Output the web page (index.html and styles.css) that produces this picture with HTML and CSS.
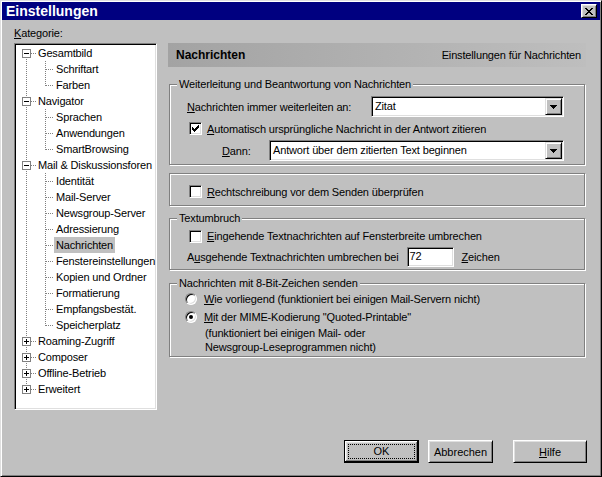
FILE: index.html
```html
<!DOCTYPE html>
<html>
<head>
  <meta charset="utf-8">
  <link rel="stylesheet" href="styles.css">
</head>
<body>
  <div class="window">
    <div class="titlebar">
      <span class="title">Einstellungen</span>
      <span class="close-btn">
        <svg width="8" height="7" viewBox="0 0 8 7" shape-rendering="crispEdges">
          <rect x="0" y="0" width="2" height="1"/><rect x="6" y="0" width="2" height="1"/>
          <rect x="1" y="1" width="2" height="1"/><rect x="5" y="1" width="2" height="1"/>
          <rect x="2" y="2" width="4" height="1"/>
          <rect x="3" y="3" width="2" height="1"/>
          <rect x="2" y="4" width="4" height="1"/>
          <rect x="1" y="5" width="2" height="1"/><rect x="5" y="5" width="2" height="1"/>
          <rect x="0" y="6" width="2" height="1"/><rect x="6" y="6" width="2" height="1"/>
        </svg>
      </span>
    </div>

    <div class="main">
      <div class="sidebar">
        <div class="sidebar-label"><u>K</u>ategorie:</div>
        <ul class="tree">
          <li>
            <div class="row"><span class="toggle"></span><span class="label">Gesamtbild</span></div>
            <ul>
              <li><div class="row"><span class="label">Schriftart</span></div></li>
              <li><div class="row"><span class="label">Farben</span></div></li>
            </ul>
          </li>
          <li>
            <div class="row"><span class="toggle"></span><span class="label">Navigator</span></div>
            <ul>
              <li><div class="row"><span class="label">Sprachen</span></div></li>
              <li><div class="row"><span class="label">Anwendungen</span></div></li>
              <li><div class="row"><span class="label">SmartBrowsing</span></div></li>
            </ul>
          </li>
          <li>
            <div class="row"><span class="toggle"></span><span class="label">Mail &amp; Diskussionsforen</span></div>
            <ul>
              <li><div class="row"><span class="label">Identität</span></div></li>
              <li><div class="row"><span class="label">Mail-Server</span></div></li>
              <li><div class="row"><span class="label">Newsgroup-Server</span></div></li>
              <li><div class="row"><span class="label">Adressierung</span></div></li>
              <li><div class="row"><span class="label selected">Nachrichten</span></div></li>
              <li><div class="row"><span class="label">Fenstereinstellungen</span></div></li>
              <li><div class="row"><span class="label">Kopien und Ordner</span></div></li>
              <li><div class="row"><span class="label">Formatierung</span></div></li>
              <li><div class="row"><span class="label">Empfangsbestät.</span></div></li>
              <li><div class="row"><span class="label">Speicherplatz</span></div></li>
            </ul>
          </li>
          <li><div class="row"><span class="toggle plus"></span><span class="label">Roaming-Zugriff</span></div></li>
          <li><div class="row"><span class="toggle plus"></span><span class="label">Composer</span></div></li>
          <li><div class="row"><span class="toggle plus"></span><span class="label">Offline-Betrieb</span></div></li>
          <li><div class="row"><span class="toggle plus"></span><span class="label">Erweitert</span></div></li>
        </ul>
      </div>

      <div class="panel">
        <div class="panel-header">
          <span class="panel-title">Nachrichten</span>
          <span>Einstellungen für Nachrichten</span>
        </div>

        <div class="group group-forward">
          <div class="group-title">Weiterleitung und Beantwortung von Nachrichten</div>
          <div class="field-row row-forward">
            <span><u>N</u>achrichten immer weiterleiten an:</span>
            <div class="combo combo-short">
              <span class="combo-text">Zitat</span>
              <span class="combo-btn">
                <svg width="7" height="4" viewBox="0 0 7 4" shape-rendering="crispEdges"><path d="M0 0h7v1H6v1H5v1H4v1H3V3H2V2H1V1H0z"/></svg>
              </span>
            </div>
          </div>
          <div class="field-row row-check">
            <span class="check checked">
              <svg width="7" height="7" viewBox="0 0 7 7" shape-rendering="crispEdges"><path d="M6 0h1v3H6v1H5v1H4v1H3v1H2V6H1V5H0V2h1v1h1v1h1V3h1V2h1V1h1z"/></svg>
            </span>
            <span class="check-label"><u>A</u>utomatisch ursprüngliche Nachricht in der Antwort zitieren</span>
          </div>
          <div class="field-row row-then">
            <span><u>D</u>ann:</span>
            <div class="combo combo-long">
              <span class="combo-text">Antwort über dem zitierten Text beginnen</span>
              <span class="combo-btn">
                <svg width="7" height="4" viewBox="0 0 7 4" shape-rendering="crispEdges"><path d="M0 0h7v1H6v1H5v1H4v1H3V3H2V2H1V1H0z"/></svg>
              </span>
            </div>
          </div>
        </div>

        <div class="group group-spell">
          <div class="field-row row-check">
            <span class="check"></span>
            <span class="check-label"><u>R</u>echtschreibung vor dem Senden überprüfen</span>
          </div>
        </div>

        <div class="group group-wrap">
          <div class="group-title">Textumbruch</div>
          <div class="field-row row-check row-check-wrap">
            <span class="check"></span>
            <span class="check-label"><u>E</u>ingehende Textnachrichten auf Fensterbreite umbrechen</span>
          </div>
          <div class="field-row row-width">
            <span>A<u>u</u>sgehende Textnachrichten umbrechen bei</span>
            <span class="textbox">72</span>
            <span class="unit"><u>Z</u>eichen</span>
          </div>
        </div>

        <div class="group group-8bit">
          <div class="group-title">Nachrichten mit 8-Bit-Zeichen senden</div>
          <div class="field-row row-radio">
            <span class="radio"></span>
            <span class="radio-label"><u>W</u>ie vorliegend (funktioniert bei einigen Mail-Servern nicht)</span>
          </div>
          <div class="field-row row-radio">
            <span class="radio checked"></span>
            <span class="radio-label"><u>M</u>it der MIME-Kodierung "Quoted-Printable"</span>
          </div>
          <div class="radio-note">(funktioniert bei einigen Mail- oder<br>Newsgroup-Leseprogrammen nicht)</div>
        </div>
      </div>
    </div>

    <div class="buttons">
      <button class="btn btn-ok"><span class="focus">OK</span></button>
      <button class="btn btn-cancel">Abbrechen</button>
      <button class="btn btn-help"><u>H</u>ilfe</button>
    </div>
  </div>
</body>
</html>
```

FILE: styles.css
```css
* {
  box-sizing: border-box;
  margin: 0;
  padding: 0;
}

body {
  background: #c0c0c0;
  font-family: "Liberation Sans", Arial, sans-serif;
  font-size: 11px;
  color: #000;
}

u {
  text-decoration-thickness: 1px;
  text-underline-offset: 1px;
}

/* window frame */
.window {
  width: 602px;
  height: 477px;
  display: flex;
  flex-direction: column;
  padding: 1px;
  background: #c0c0c0;
  border: 1px solid;
  border-color: #dfdfdf #000 #000 #dfdfdf;
  box-shadow: inset 1px 1px #fff, inset -1px -1px #808080;
  letter-spacing: -0.15px;
}

.titlebar {
  height: 18px;
  display: flex;
  align-items: center;
  padding: 0 3px 0 4px;
  background: #000080;
  color: #fff;
}

.title {
  font-size: 14px;
  font-weight: bold;
  letter-spacing: 0;
}

.close-btn {
  margin-left: auto;
  width: 16px;
  height: 14px;
  display: flex;
  align-items: center;
  justify-content: center;
  background: #c0c0c0;
  border: 1px solid;
  border-color: #fff #000 #000 #fff;
  box-shadow: inset 1px 1px #dfdfdf, inset -1px -1px #808080;
}

/* layout */
.main {
  display: flex;
  gap: 11px;
  padding: 7px 14px 0 12px;
}

.sidebar {
  width: 143px;
}

.sidebar-label {
  line-height: 13px;
  margin-bottom: 3px;
}

/* tree view */
.tree {
  list-style: none;
  width: 143px;
  height: 367px;
  overflow: hidden;
  background: #fff;
  border: 1px solid;
  border-color: #808080 #fff #fff #808080;
  box-shadow: inset 1px 1px #000, inset -1px -1px #dfdfdf;
  padding: 1px;
}

.tree ul {
  list-style: none;
}

.row {
  height: 16px;
  display: flex;
  align-items: center;
  white-space: nowrap;
}

.label {
  line-height: 16px;
  padding: 0 2px;
}

.label.selected {
  background: #c0c0c0;
}

.tree > li {
  background: repeating-linear-gradient(to bottom, #808080 0 1px, transparent 1px 2px) 10px 0 / 1px 100% no-repeat;
}

.tree > li:first-child {
  background-position: 10px 8px;
}

.tree > li:last-child {
  background-size: 1px 9px;
}

.tree > li > .row {
  padding-left: 6px;
  background: repeating-linear-gradient(to right, #808080 0 1px, transparent 1px 2px) 11px 8px / 9px 1px no-repeat;
}

.tree ul li {
  background: repeating-linear-gradient(to bottom, #808080 0 1px, transparent 1px 2px) 29px 0 / 1px 100% no-repeat;
}

.tree ul li:last-child {
  background-size: 1px 9px;
}

.tree ul .row {
  padding-left: 38px;
  background: repeating-linear-gradient(to right, #808080 0 1px, transparent 1px 2px) 30px 8px / 8px 1px no-repeat;
}

.toggle {
  width: 9px;
  height: 9px;
  margin-right: 5px;
  border: 1px solid #808080;
  background: #fff linear-gradient(#000, #000) center / 5px 1px no-repeat;
}

.toggle.plus {
  background:
    linear-gradient(#000, #000) center / 5px 1px no-repeat,
    linear-gradient(#000, #000) center / 1px 5px no-repeat,
    #fff;
}

/* right panel */
.panel {
  width: 418px;
  padding-top: 16px;
}

.panel-header {
  height: 24px;
  display: flex;
  align-items: center;
  justify-content: space-between;
  padding: 0 5px 0 8px;
  background: linear-gradient(to right, #a3a3a3, #bebebe);
}

.panel-title {
  font-size: 12px;
  font-weight: bold;
  letter-spacing: 0;
}

.group {
  margin: 0 1px;
  border: 1px solid #808080;
  box-shadow: inset 1px 1px #fff, 1px 1px #fff;
}

.group-title {
  width: fit-content;
  margin: -7px 0 0 7px;
  padding: 0 2px;
  line-height: 13px;
  background: #c0c0c0;
}

.group-forward {
  margin-top: 17px;
  padding-bottom: 3px;
}

.group-spell {
  margin-top: 8px;
  padding: 6px 0 2px;
}

.group-wrap {
  margin-top: 12px;
  padding-bottom: 2px;
}

.group-8bit {
  margin-top: 13px;
  padding: 0 0 2px;
}

.field-row {
  display: flex;
  align-items: center;
  white-space: nowrap;
}

.row-forward {
  height: 21px;
  margin-top: 5px;
  padding: 0 20px 0 17px;
}

.row-check {
  height: 23px;
  padding-left: 19px;
}

.row-check-wrap {
  height: 22px;
}

.row-then {
  height: 21px;
  padding: 0 20px 0 52px;
}

.row-width {
  height: 20px;
  padding-left: 17px;
}

/* controls */
.combo {
  margin-left: auto;
  height: 21px;
  display: flex;
  padding: 1px;
  background: #fff;
  border: 1px solid;
  border-color: #808080 #fff #fff #808080;
  box-shadow: inset 1px 1px #000, inset -1px -1px #dfdfdf;
}

.combo-short {
  width: 193px;
}

.combo-long {
  width: 295px;
}

.combo-text {
  flex: 1;
  padding-left: 2px;
  line-height: 17px;
}

.combo-btn {
  width: 17px;
  height: 17px;
  display: flex;
  align-items: center;
  justify-content: center;
  background: #c0c0c0;
  border: 1px solid;
  border-color: #dfdfdf #000 #000 #dfdfdf;
  box-shadow: inset 1px 1px #fff, inset -1px -1px #808080;
}

.check {
  width: 13px;
  height: 13px;
  display: flex;
  align-items: center;
  justify-content: center;
  background: #fff;
  border: 1px solid;
  border-color: #808080 #fff #fff #808080;
  box-shadow: inset 1px 1px #000, inset -1px -1px #dfdfdf;
}

.check-label {
  margin-left: 5px;
}

.textbox {
  width: 47px;
  height: 20px;
  margin-left: 8px;
  padding-left: 2px;
  line-height: 16px;
  background: #fff;
  border: 1px solid;
  border-color: #808080 #fff #fff #808080;
  box-shadow: inset 1px 1px #000, inset -1px -1px #dfdfdf;
}

.unit {
  margin-left: 8px;
}

.row-radio {
  height: 18px;
  padding-left: 15px;
}

.row-radio:first-of-type {
  margin-top: 2px;
}

.radio {
  width: 12px;
  height: 12px;
  border-radius: 50%;
  display: flex;
  align-items: center;
  justify-content: center;
  background: #fff;
  border: 1px solid;
  border-color: #808080 #fff #fff #808080;
  box-shadow: inset 1px 1px #000, inset -1px -1px #dfdfdf;
}

.radio.checked::after {
  content: "";
  width: 4px;
  height: 4px;
  border-radius: 50%;
  background: #000;
}

.radio-label {
  margin-left: 7px;
}

.radio-note {
  padding-left: 35px;
  line-height: 14px;
}

/* dialog buttons */
.buttons {
  margin-top: auto;
  display: flex;
  justify-content: flex-end;
  padding: 0 13px 12px 0;
}

.btn {
  height: 23px;
  font: inherit;
  color: #000;
  background: #c0c0c0;
  border: 1px solid;
  border-color: #fff #000 #000 #fff;
  box-shadow: inset 1px 1px #dfdfdf, inset -1px -1px #808080;
}

.btn-ok {
  width: 75px;
  padding: 3px;
  border-color: #000;
  box-shadow: inset -1px -1px #000, inset 1px 1px #fff, inset -2px -2px #808080, inset 2px 2px #dfdfdf;
}

.btn-ok .focus {
  display: block;
  height: 15px;
  line-height: 13px;
  border: 1px dotted #000;
}

.btn-cancel {
  width: 65px;
  margin-left: 9px;
}

.btn-help {
  width: 74px;
  margin-left: 20px;
}
```
